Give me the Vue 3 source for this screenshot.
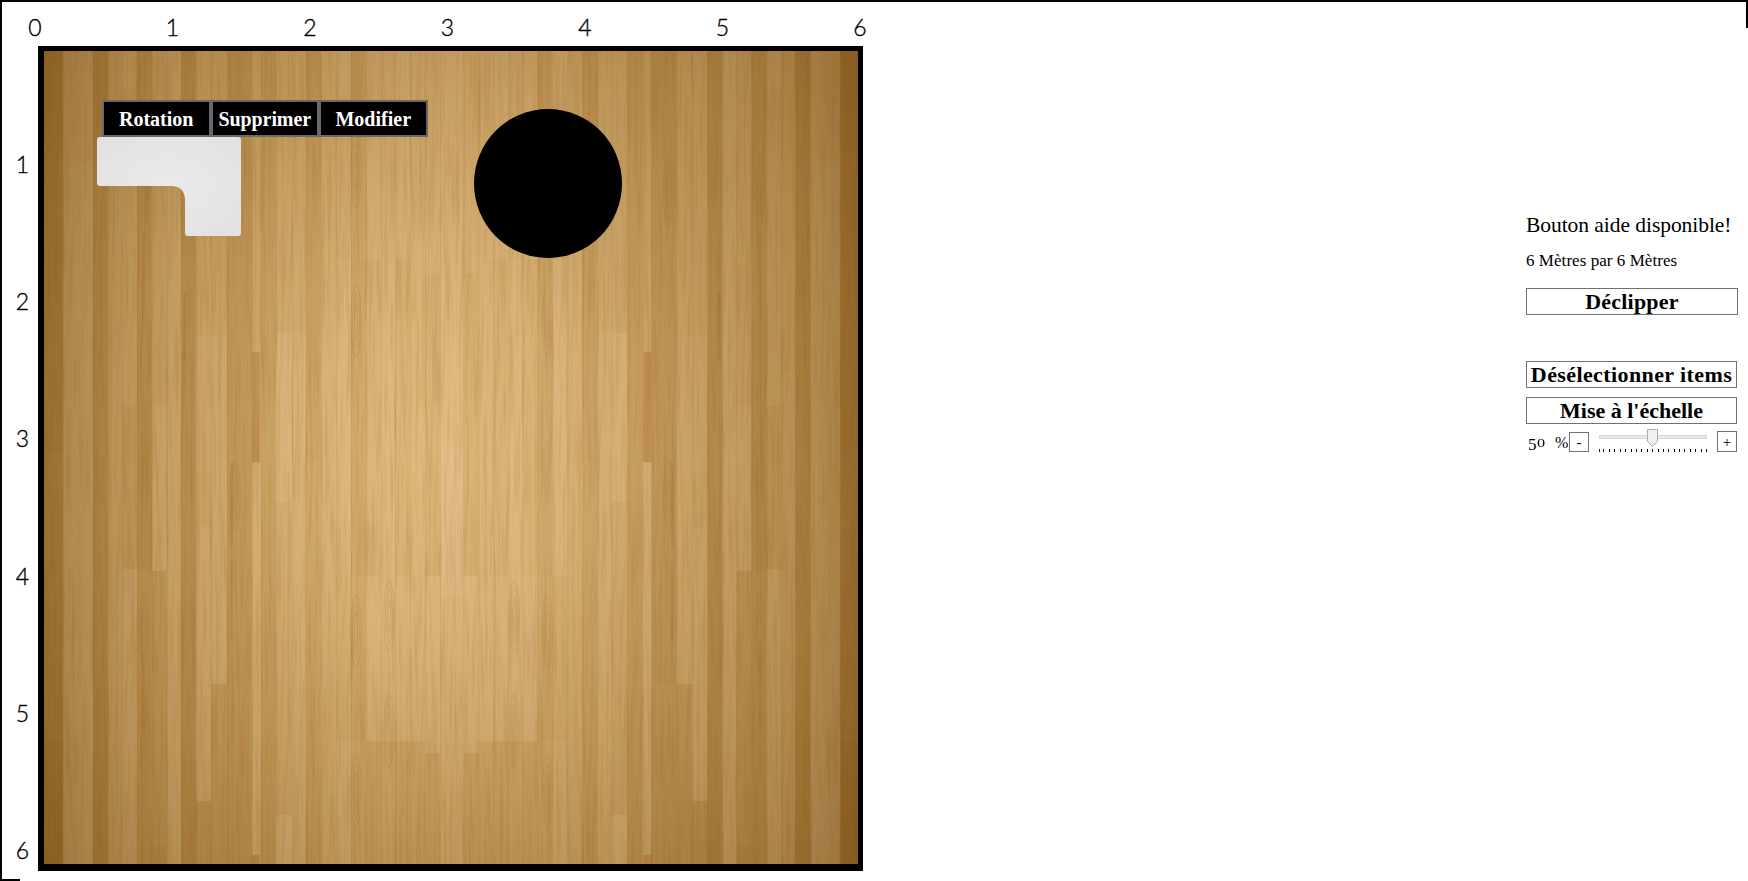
<script setup>
const marks = [1, 2, 3, 4, 5, 6]
const CENTER = 407.7

// left half of the parquet: x, width, tint, strength, joints [y, tint]
const LIGHT = '#fbe8cc'
const DARK = '#7a4508'
const half = [
  [0, 19, DARK, 0.17, [[400, 0.05], [690, -0.03]]],
  [19, 30, LIGHT, 0.12, [[111, 0.14], [591, 0.16]]],
  [49, 15, DARK, 0.12, [[540, 0.0], [633, -0.02]]],
  [64, 14, LIGHT, 0.06, [[320, 0.08]]],
  [78, 15, LIGHT, 0.1, [[38, 0.08], [355, 0.02], [518, 0.12]]],
  [93, 15, DARK, 0.08, [[270, -0.05], [520, 0.02]]],
  [108, 15, LIGHT, 0.08, [[355, 0.12], [520, -0.01], [795, -0.08]]],
  [123, 14, LIGHT, 0.1, [[400, 0.12]]],
  [137, 15, DARK, 0.14, [[300, -0.02]]],
  [152, 15, LIGHT, 0.07, [[285, 0.11], [420, 0.06], [476, 0.12], [750, -0.02]]],
  [167, 16, LIGHT, 0.05, [[285, 0.1], [633, -0.04]]],
  [183, 25, DARK, 0.1, [[152, 0.0], [633, 0.02]]],
  [208, 9, LIGHT, 0.05, [[411, 0.14]]],
  [217, 15, DARK, 0.05, [[411, -0.01]]],
  [232, 16, LIGHT, 0.07, [[282, 0.17], [451, 0.07], [764, 0.16]]],
  [248, 14, LIGHT, 0.06, [[282, 0.1]]],
  [262, 15, DARK, 0.08, [[411, 0.03]]],
  [277, 15, LIGHT, 0.06, [[420, 0.06]]],
  [292, 15, LIGHT, 0.1, [[44, 0.07], [208, 0.12], [525, 0.05], [690, 0.1]]],
  [307, 15, DARK, 0.05, [[208, -0.02], [525, 0.02], [690, 0.06]]],
  [322, 15, LIGHT, 0.08, [[44, 0.11], [208, 0.04], [525, 0.12], [690, -0.01]]],
  [337, 14, LIGHT, 0.07, [[208, 0.1], [525, 0.12], [690, 0.02]]],
  [351, 15, LIGHT, 0.1, [[208, 0.01], [525, 0.1], [690, -0.02]]],
  [366, 15, LIGHT, 0.08, [[208, 0.05], [540, 0.11], [690, -0.01]]],
  [381, 15, LIGHT, 0.07, [[222, -0.02], [525, 0.1], [702, -0.02]]],
  [396, 11.7, LIGHT, 0.11, [[390, 0.16], [546, 0.08]]],
]
const boards = []
for (const [x, w, tint, a, joints] of half) {
  const segs = [[0, tint === DARK ? -a : a], ...joints.map(([y, d]) => [y, tint === DARK ? d - a : d])]
  segs.forEach(([y, v], i) => {
    const end = i + 1 < segs.length ? segs[i + 1][0] : 813
    const b = { y, h: end - y, w, fill: v < 0 ? DARK : LIGHT, a: Math.abs(v) }
    boards.push({ ...b, x }, { ...b, x: 2 * CENTER - x - w })
  })
}
const knots = []
for (const [x, y, h, a] of [[208, 301, 110, 0.24], [208, 804, 9, 0.3], [98, 180, 90, 0.13], [98, 600, 80, 0.13], [186, 411, 85, 0.13], [139, 240, 70, 0.15], [186, 510, 80, 0.13]]) {
  const w = x === 208 ? 8 : 3
  knots.push({ x, y, h, a, w }, { x: 2 * CENTER - x - w, y, h, a, w })
}
const seams = half.flatMap(([x]) => [x, 2 * CENTER - x])
// cathedral grain figures
const rings = []
for (const [x, y] of [[100, 120], [100, 560], [191, 425], [191, 120], [312, 100], [312, 250], [312, 560], [312, 720], [100, 400], [28, 690], [345, 545], [345, 660]]) {
  for (const cx of [x, 2 * CENTER - x]) {
    for (const k of [1, 2, 3]) rings.push({ cx, cy: y + 20, rx: k * 1.7, ry: 9 + k * 9 })
  }
}
const ticks = [0, 4, ...Array.from({ length: 19 }, (_, i) => Math.round(10 + i * 5.39))]
</script>

<template>
  <div class="page">
    <i class="edge top"></i><i class="edge left"></i><i class="edge right"></i><i class="edge bottom"></i>
    <div class="plan">
      <div class="ruler-x">
        <span v-for="n in [0, ...marks]" :key="n">{{ n }}</span>
      </div>
      <div class="body">
        <div class="ruler-y">
          <span v-for="n in marks" :key="n">{{ n }}</span>
        </div>
        <div class="room">
          <svg class="floor" width="814" height="813" viewBox="0 0 814 813">
            <defs>
              <radialGradient id="glow" gradientUnits="userSpaceOnUse" cx="0" cy="0" r="1" gradientTransform="translate(395 400) scale(510 700)">
                <stop offset="0" stop-color="#dfb87b" />
                <stop offset=".25" stop-color="#d5ae71" />
                <stop offset=".5" stop-color="#c2995b" />
                <stop offset=".75" stop-color="#ad8446" />
                <stop offset="1" stop-color="#966c30" />
              </radialGradient>
              <linearGradient id="side">
                <stop offset="0" stop-color="#6b3f00" stop-opacity=".18" />
                <stop offset=".09" stop-color="#6b3f00" stop-opacity="0" />
                <stop offset=".92" stop-color="#6b3f00" stop-opacity="0" />
                <stop offset="1" stop-color="#6b3f00" stop-opacity=".22" />
              </linearGradient>
              <filter id="grain" x="0" y="0" width="100%" height="100%" color-interpolation-filters="sRGB">
                <feTurbulence type="fractalNoise" baseFrequency=".32 .011" numOctaves="4" seed="8" />
                <feColorMatrix values="0 0 0 0 .5  0 0 0 0 .28  0 0 0 0 .06  2.2 0 0 0 -.95" />
              </filter>
            </defs>
            <rect width="814" height="813" fill="url(#glow)" />
            <rect v-for="(b, i) in boards" :key="i" :x="b.x" :y="b.y" :width="b.w" :height="b.h" :fill="b.fill" :fill-opacity="b.a" />
            <rect v-for="(k, i) in knots" :key="'k' + i" :x="k.x" :y="k.y" :width="k.w" :height="k.h" fill="#9a4c10" :fill-opacity="k.a" />
            <rect v-for="(x, i) in seams" :key="'s' + i" :x="x" y="0" width="1" height="813" fill="#8a5a1c" fill-opacity=".13" />
            <ellipse v-for="(r, i) in rings" :key="'r' + i" :cx="r.cx" :cy="r.cy" :rx="r.rx" :ry="r.ry" fill="none" stroke="#8a5518" stroke-opacity=".14" />
            <rect width="814" height="813" filter="url(#grain)" opacity=".16" />
            <rect width="814" height="813" fill="url(#side)" />
          </svg>
          <svg class="desk" width="144" height="99" viewBox="0 0 144 99">
            <defs>
              <radialGradient id="desk" cx=".5" cy=".5" r=".65">
                <stop offset="0" stop-color="#eaeaea" />
                <stop offset="1" stop-color="#e2e2e2" />
              </radialGradient>
            </defs>
            <path d="M3 0H141Q144 0 144 3V96Q144 99 141 99H91Q88 99 88 96V62Q87 49 74 49H3Q0 49 0 46V3Q0 0 3 0Z" fill="url(#desk)" />
          </svg>
          <div class="table"></div>
          <div class="menu">
            <button class="rot">Rotation</button><button class="sup">Supprimer</button><button class="mod">Modifier</button>
          </div>
        </div>
      </div>
    </div>
    <aside class="panel">
      <p class="help"><span>Bouton aide disponible!</span></p>
      <p class="dims"><span>6 Mètres par 6 Mètres</span></p>
      <button class="btn unclip"><span>Déclipper</span></button>
      <button class="btn deselect"><span>Désélectionner items</span></button>
      <button class="btn scale"><span>Mise à l'échelle</span></button>
      <div class="zoom">
        <span class="value"><span class="five">5</span><span class="zero">0</span></span>
        <span class="pct">%</span>
        <button class="step minus">-</button>
        <svg class="slider" width="110" height="26" viewBox="0 0 110 26">
          <rect x=".5" y="6.5" width="107" height="3" fill="#e7eaea" stroke="#d6d6d6" />
          <path d="M48.5 .5H58.5V12.5L53.5 17.5L48.5 12.5Z" fill="#f0f0f0" stroke="#acacac" />
          <rect v-for="x in ticks" :key="x" :x="x" y="20" width="1" height="3" fill="#000" />
        </svg>
        <button class="step plus">+</button>
      </div>
    </aside>
  </div>
</template>

<style>
html, body { margin: 0; background: #fff; overflow: hidden; }
</style>

<style scoped>
.page { position: relative; display: flex; justify-content: space-between; box-sizing: border-box; width: 1748px; height: 881px; overflow: hidden; background: #fff; color: #000; font-family: "Liberation Serif", serif; }
button { font: inherit; color: inherit; padding: 0; border-radius: 0; box-sizing: border-box; white-space: nowrap; }
p { margin: 0; }
.edge { position: absolute; background: #000; }
.top { top: 0; left: 0; right: 0; height: 2px; }
.left { top: 0; left: 0; bottom: 0; width: 2px; }
.right { top: 0; right: 0; width: 2px; height: 28px; }
.bottom { bottom: 0; left: 0; height: 2px; width: 20px; }
.plan { display: flex; flex-direction: column; width: 880px; padding-top: 13px; font-family: Lato, sans-serif; font-size: 23px; font-weight: 300; }
.ruler-x, .ruler-y { -webkit-text-stroke: .35px #000; }
.ruler-x { display: flex; height: 33px; padding-left: 25px; }
.ruler-x span { width: 20px; margin-right: 117.5px; line-height: 28px; text-align: center; flex: none; }
.body { display: flex; }
.ruler-y { width: 38px; height: 825px; padding-top: 103.5px; flex: none; box-sizing: border-box; }
.ruler-y span { display: block; height: 137.4px; padding: 0 6px 0 13px; text-align: center; line-height: 28px; }
.room { position: relative; box-sizing: border-box; width: 825px; height: 825px; border: solid #000; border-width: 5px 5px 7px 6px; flex: none; }
.floor { display: block; }
.desk { position: absolute; left: 53px; top: 86px; }
.table { position: absolute; left: 430px; top: 58px; width: 148px; height: 149px; border-radius: 50%; background: #000; }
.menu { position: absolute; left: 58px; top: 49px; display: flex; font-family: "Liberation Serif", serif; }
.menu button { width: 108.5px; height: 37px; background: #000; color: #fff; border: 2px solid #696969; font-size: 20px; font-weight: 700; line-height: 32px; padding-top: 1px; }
.sup { letter-spacing: -.1px; }
.panel { display: flex; flex-direction: column; width: 212px; margin-right: 10px; padding-top: 211px; }
.panel p, .btn { white-space: nowrap; }
.help { font-size: 21.5px; line-height: 28px; height: 38px; letter-spacing: -.05px; }
.dims { font-size: 17px; line-height: 24px; height: 39px; letter-spacing: .05px; }
.btn { height: 27px; border: 1px solid #707070; background: #fff; font-size: 22px; font-weight: 700; line-height: 25px; }
.unclip { letter-spacing: .2px; }
.deselect { width: 211px; margin-top: 46px; letter-spacing: .4px; }
.scale { width: 211px; margin-top: 9px; }
.zoom { display: flex; height: 28px; margin-top: 5px; }
.value { display: flex; width: 29px; padding-left: 2px; box-sizing: border-box; font-size: 17px; line-height: 27px; }
.five { padding-top: 2px; width: 8.5px; }
.zero { font-size: 12.5px; line-height: 28px; transform: scaleX(1.3); transform-origin: left; }
.pct { width: 14px; font-size: 16px; line-height: 27px; }
.step { border: 1px solid #707070; background: #fff; width: 20px; height: 20px; margin-top: 3px; font-size: 15px; line-height: 18px; flex: none; }
.slider { margin-left: 10px; flex: none; }
.plus { margin-left: 8px; margin-top: 2px; height: 21px; line-height: 21px; }
</style>
